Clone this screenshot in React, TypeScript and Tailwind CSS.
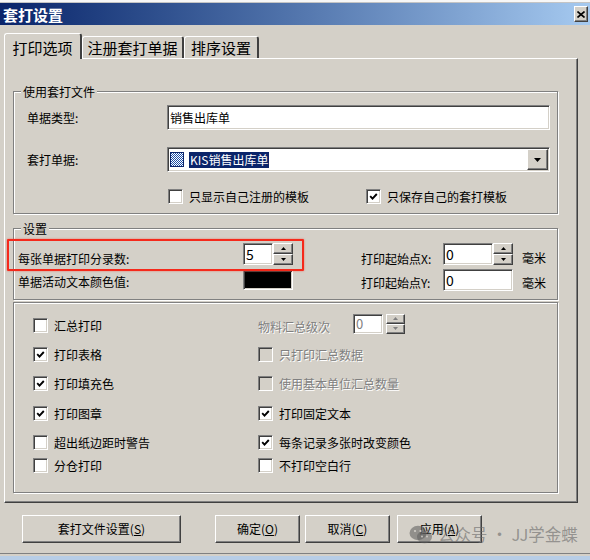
import type { ReactNode } from 'react';

const sunken =
  'border border-t-[#808080] border-l-[#808080] border-r-white border-b-white shadow-[inset_1px_1px_0_#404040,inset_-1px_-1px_0_#d4d0c8]';
const raised =
  'border border-t-white border-l-white border-r-[#404040] border-b-[#404040] shadow-[inset_-1px_-1px_0_#808080]';
const disabledText = 'text-[#808080] [text-shadow:1px_1px_0_#fff]';

function Group({ legend, className, children }: { legend?: string; className: string; children: ReactNode }) {
  return (
    <div className={`border border-[#808080] shadow-[inset_1px_1px_0_#fff,1px_1px_0_#fff] ${className}`}>
      {legend && (
        <div className="-mt-[7px] ml-[7px] w-fit px-[2px] bg-[#d4d0c8] leading-[14px]">{legend}</div>
      )}
      {children}
    </div>
  );
}

function Arrow({ up, disabled }: { up?: boolean; disabled?: boolean }) {
  return (
    <svg width="5" height="3" viewBox="0 0 5 3">
      <path d={up ? 'M0 3 L2.5 0 L5 3 Z' : 'M0 0 L5 0 L2.5 3 Z'} fill={disabled ? '#808080' : '#000'} />
    </svg>
  );
}

function SpinBtns({ size, disabled }: { size: string; disabled?: boolean }) {
  return (
    <div className={`flex flex-col ${size}`}>
      <div className={`flex-1 flex items-center justify-center bg-[#d4d0c8] ${raised}`}>
        <Arrow up disabled={disabled} />
      </div>
      <div className={`flex-1 flex items-center justify-center bg-[#d4d0c8] ${raised}`}>
        <Arrow disabled={disabled} />
      </div>
    </div>
  );
}

function Check({ label, checked, disabled, className = '' }: { label: string; checked?: boolean; disabled?: boolean; className?: string }) {
  return (
    <div className={`flex items-center h-[15px] ${className}`}>
      <span
        className={`w-[15px] h-[15px] shrink-0 flex items-center justify-center ${sunken} ${
          disabled ? 'bg-[#d4d0c8]' : 'bg-white'
        }`}
      >
        {checked && (
          <svg width="9" height="9" viewBox="0 0 9 9">
            <path d="M1.2 4.2 L3.5 6.6 L7.8 2" stroke="#000" strokeWidth="1.9" fill="none" />
          </svg>
        )}
      </span>
      <span className={`ml-[6px] leading-[15px] whitespace-nowrap ${disabled ? disabledText : ''}`}>{label}</span>
    </div>
  );
}

function Button({ width, text, hotkey }: { width: string; text: string; hotkey: string }) {
  return (
    <div className={`h-[28px] flex items-center justify-center bg-[#d4d0c8] ${raised} ${width}`}>
      {text}(<span className="underline">{hotkey}</span>)
    </div>
  );
}

const options = [
  { left: { label: '汇总打印' }, right: null, mt: 'mt-[15px]' },
  { left: { label: '打印表格', checked: true }, right: { label: '只打印汇总数据', disabled: true }, mt: 'mt-[14px]' },
  { left: { label: '打印填充色', checked: true }, right: { label: '使用基本单位汇总数量', disabled: true }, mt: 'mt-[14px]' },
  { left: { label: '打印图章', checked: true }, right: { label: '打印固定文本', checked: true }, mt: 'mt-[15px]' },
  { left: { label: '超出纸边距时警告' }, right: { label: '每条记录多张时改变颜色', checked: true }, mt: 'mt-[14px]' },
  { left: { label: '分仓打印' }, right: { label: '不打印空白行' }, mt: 'mt-[8px]' },
];

export default function App() {
  return (
    <div className="relative w-[590px] h-[560px] overflow-hidden bg-[#d4d0c8] text-[12px] text-black font-['Noto_Sans_CJK_SC','Noto_Sans',sans-serif]">
      {/* edge of the window behind */}
      <div className="h-[3px] bg-[#f7f7f7] border-b border-[#c4c4c4]" />

      {/* Title bar */}
      <div className="h-[22px] flex items-center justify-between pl-[3px] pr-[2px] bg-linear-to-r from-[#0a246a] to-[#a6caf0]">
        <span className="text-white font-bold text-[15px] leading-none">套打设置</span>
        <div className={`w-[14px] h-[16px] flex items-center justify-center bg-[#d4d0c8] ${raised}`}>
          <svg width="8" height="7" viewBox="0 0 8 7">
            <path d="M0.5 0.5 L7.5 6.5 M7.5 0.5 L0.5 6.5" stroke="#000" strokeWidth="1.6" />
          </svg>
        </div>
      </div>

      <div className="pl-[4px] pt-[8px]">
        {/* Tabs */}
        <div className="flex items-end h-[25px] text-[15px]">
          <div className="relative z-10 w-[78px] h-[26px] -mb-px pt-[3px] flex justify-center bg-[#d4d0c8] border-l border-t border-white border-r-2 border-r-[#404040] rounded-t-[3px]">
            打印选项
          </div>
          <div className="w-[102px] h-[22px] flex justify-center items-center pt-[2px] border-l border-t border-white border-r-2 border-r-[#404040] rounded-t-[3px]">
            注册套打单据
          </div>
          <div className="w-[75px] h-[22px] flex justify-center items-center pt-[2px] border-l border-t border-white border-r-2 border-r-[#404040] rounded-t-[3px]">
            排序设置
          </div>
        </div>

        {/* Tab panel */}
        <div className="w-[574px] h-[445px] pl-[8px] pt-[32px] border-l border-t border-white border-r border-b border-r-[#404040] border-b-[#404040] shadow-[inset_-1px_-1px_0_#808080]">
          <Group legend="使用套打文件" className="w-[545px] h-[123px]">
            <div className="mt-[6px] flex items-center h-[25px]">
              <span className="w-[153px] pl-[13px]">单据类型:</span>
              <div className={`w-[383px] h-[25px] flex items-center pl-[2px] bg-white ${sunken}`}>销售出库单</div>
            </div>
            <div className="mt-[17px] flex items-center h-[25px]">
              <span className="w-[153px] pl-[13px]">套打单据:</span>
              <div className={`w-[383px] h-[25px] flex items-center pl-[2px] pr-px bg-white ${sunken}`}>
                <svg width="14" height="15" viewBox="0 0 14 15" className="shrink-0">
                  <defs>
                    <pattern id="chk" width="2" height="2" patternUnits="userSpaceOnUse">
                      <rect width="2" height="2" fill="#ffffff" />
                      <rect width="1" height="1" fill="#1d4fa8" />
                      <rect x="1" y="1" width="1" height="1" fill="#1d4fa8" />
                    </pattern>
                  </defs>
                  <rect x="0.5" y="0.5" width="13" height="14" fill="url(#chk)" stroke="#0a246a" />
                </svg>
                <span className="ml-[5px] px-[1px] h-[16px] leading-[16px] bg-[#0a246a] text-white">KIS销售出库单</span>
                <div className={`ml-auto w-[21px] h-[21px] flex items-center justify-center bg-[#d4d0c8] ${raised}`}>
                  <svg width="7" height="4" viewBox="0 0 7 4">
                    <path d="M0 0 L7 0 L3.5 4 Z" fill="#000" />
                  </svg>
                </div>
              </div>
            </div>
            <div className="mt-[17px] flex pl-[154px]">
              <Check label="只显示自己注册的模板" className="w-[198px]" />
              <Check label="只保存自己的套打模板" checked />
            </div>
          </Group>

          <Group legend="设置" className="mt-[14px] w-[545px] h-[72px]">
            <div className="mt-[7px] flex items-start h-[22px] pl-[4px]">
              <span className="w-[225px] mt-[9px] leading-[14px]">每张单据打印分录数:</span>
              <div className={`w-[30px] h-[22px] pl-[2px] flex items-center bg-white text-[14px] ${sunken}`}>5</div>
              <SpinBtns size="w-[20px] h-[22px]" />
              <span className="ml-[68px] w-[82px] mt-[9px] leading-[14px]">打印起始点X:</span>
              <div className={`w-[50px] h-[22px] pl-[2px] flex items-center bg-white text-[14px] ${sunken}`}>0</div>
              <SpinBtns size="w-[20px] h-[22px]" />
              <span className="ml-[9px] mt-[8px] leading-[14px]">毫米</span>
            </div>
            <div className="mt-[4px] flex items-start h-[22px] pl-[4px]">
              <span className="w-[225px] mt-[6px] leading-[14px]">单据活动文本颜色值:</span>
              <div className={`mt-px w-[50px] h-[20px] bg-black ${sunken}`} />
              <span className="ml-[68px] w-[82px] mt-[7px] leading-[14px]">打印起始点Y:</span>
              <div className={`w-[70px] h-[22px] pl-[2px] flex items-center bg-white text-[14px] ${sunken}`}>0</div>
              <span className="ml-[9px] mt-[7px] leading-[14px]">毫米</span>
            </div>
          </Group>

          <Group className="mt-[2px] w-[545px] h-[191px]">
            {options.map((row) => (
              <div key={row.left.label} className={`${row.mt} flex items-center h-[15px] pl-[19px]`}>
                <Check label={row.left.label} checked={row.left.checked} className="w-[225px]" />
                {row.right ? (
                  <Check label={row.right.label} checked={row.right.checked} disabled={row.right.disabled} />
                ) : (
                  <div className="flex items-center h-[15px]">
                    <span className={`w-[95px] mt-[3px] ${disabledText}`}>物料汇总级次</span>
                    <div className={`w-[30px] h-[20px] -mt-[4px] pl-[2px] flex items-center bg-white text-[13px] text-[#808080] ${sunken}`}>
                      0
                    </div>
                    <div className="ml-[3px] -mt-[4px]">
                      <SpinBtns size="w-[19px] h-[20px]" disabled />
                    </div>
                  </div>
                )}
              </div>
            ))}
          </Group>
        </div>
      </div>

      {/* Buttons */}
      <div className="mt-[12px] flex pl-[22px]">
        <Button width="w-[159px]" text="套打文件设置" hotkey="S" />
        <div className="ml-[34px]">
          <Button width="w-[85px]" text="确定" hotkey="O" />
        </div>
        <div className="ml-[5px]">
          <Button width="w-[85px]" text="取消" hotkey="C" />
        </div>
        <div className="ml-[7px]">
          <Button width="w-[85px]" text="应用" hotkey="A" />
        </div>
      </div>

      <div className="mt-[10px] h-px bg-[#808080]" />
      <div className="mt-[2px] h-[10px] bg-[#b7cde6]" />

      {/* highlight drawn on the screenshot */}
      <div className="absolute left-[7px] top-[239px] w-[297px] h-[32px] border-2 border-[#f5291b] rounded-[1px] shadow-[0_0_2px_rgba(255,40,20,0.6)]" />

      {/* watermark */}
      <div className="absolute left-[409px] top-[522px] flex items-center text-[16.5px] text-[rgba(105,105,105,0.6)]">
        <svg width="24" height="19" viewBox="0 0 24 19">
          <ellipse cx="9" cy="8" rx="8.5" ry="7.2" fill="rgba(90,90,90,0.55)" />
          <ellipse cx="15.5" cy="12" rx="7.5" ry="6.3" fill="rgba(90,90,90,0.5)" />
          <circle cx="6" cy="6" r="1.1" fill="rgba(215,212,205,0.9)" />
          <circle cx="11.5" cy="6" r="1.1" fill="rgba(215,212,205,0.9)" />
          <circle cx="13" cy="11.5" r="0.9" fill="rgba(215,212,205,0.9)" />
          <circle cx="18" cy="11.5" r="0.9" fill="rgba(215,212,205,0.9)" />
        </svg>
        <span className="ml-[5px] whitespace-nowrap">公众号 · JJ学金蝶</span>
      </div>
    </div>
  );
}
